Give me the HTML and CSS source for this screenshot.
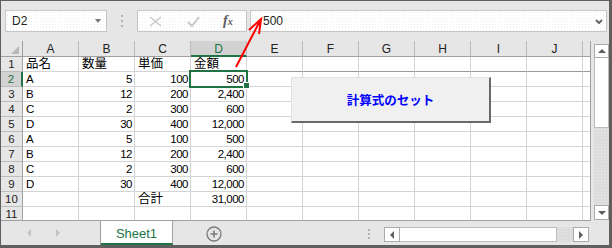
FILE: index.html
```html
<!DOCTYPE html>
<html lang="ja">
<head>
    <meta charset="UTF-8">
    <title>Sheet1 - Excel</title>
    <link rel="stylesheet" href="styles.css">
</head>
<body>
    <div class="window">
        <div class="toolbar">
            <div class="namebox"><span class="val">D2</span><span class="caret"></span></div>
            <div class="grip"></div>
            <div class="fxbtns">
                <svg class="ico-x" width="13" height="11" viewBox="0 0 13 11"><path d="M1 1L12 10M12 1L1 10"/></svg>
                <svg class="ico-ok" width="13" height="11" viewBox="0 0 13 11"><path d="M1 6L5 10L12 1"/></svg>
                <span class="fx"><i>f</i><i class="sub">x</i></span>
            </div>
            <div class="formula">
                <span class="val">500</span>
                <svg class="chev" width="8" height="5" viewBox="0 0 8 5"><path d="M1 1L4 4L7 1"/></svg>
            </div>
        </div>

        <div class="main">
            <div class="sheet">
                <div class="grid" id="grid"></div>
                <div class="sel"></div>
                <div class="handle"></div>
                <button class="macro">計算式のセット</button>
            </div>
            <div class="vscroll">
                <div class="sbtn up"><span class="tri-up"></span></div>
                <div class="vthumb"></div>
                <div class="track"></div>
                <div class="sbtn down"><span class="tri-down"></span></div>
            </div>
        </div>

        <div class="tabbar">
            <div class="nav"><span class="tri-l"></span><span class="tri-r"></span></div>
            <div class="tab">Sheet1</div>
            <svg class="addsheet" width="16" height="16" viewBox="0 0 16 16"><circle cx="8" cy="8" r="7"/><path d="M8 4.5V11.5M4.5 8H11.5"/></svg>
            <div class="hgrip"></div>
            <div class="hscroll">
                <div class="hbtn"><span class="tri-l dark"></span></div>
                <div class="hthumb"></div>
                <div class="htrack"></div>
                <div class="hbtn right"><span class="tri-r dark"></span></div>
            </div>
        </div>

        <svg class="arrow" width="612" height="248" viewBox="0 0 612 248">
            <path d="M236 67L261 19M249 30L261 19L259 34"/>
        </svg>
    </div>

    <script>
        const letters = ['A', 'B', 'C', 'D', 'E', 'F', 'G', 'H', 'I', 'J'];
        const rows = [
            ['品名', '数量', '単価', '金額'],
            ['A', '5', '100', '500'],
            ['B', '12', '200', '2,400'],
            ['C', '2', '300', '600'],
            ['D', '30', '400', '12,000'],
            ['A', '5', '100', '500'],
            ['B', '12', '200', '2,400'],
            ['C', '2', '300', '600'],
            ['D', '30', '400', '12,000'],
            ['', '', '合計', '31,000'],
            ['', '', '', '']
        ];

        let html = '<div class="corner"><span></span></div>';
        letters.forEach(l => {
            html += `<div class="ch${l === 'D' ? ' on' : ''}">${l}</div>`;
        });
        html += '<div class="ch last"></div>';

        rows.forEach((row, i) => {
            const r = i + 1;
            html += `<div class="rh${r === 2 ? ' on' : ''}">${r}</div>`;
            letters.forEach((l, c) => {
                const v = row[c] || '';
                let cls = 'c';
                if (/^[\d,]+$/.test(v)) cls += ' n';
                else if (/[^\x00-\x7f]/.test(v)) cls += ' jp';
                if (r === 1 && c >= 4) cls += ' fz';
                html += `<div class="${cls}">${v}</div>`;
            });
            html += `<div class="c last${r === 1 ? ' fz' : ''}"></div>`;
        });

        document.getElementById('grid').innerHTML = html;
    </script>
</body>
</html>
```

FILE: styles.css
```css
* {
    box-sizing: border-box;
}
html, body {
    margin: 0;
    padding: 0;
}
body {
    width: 612px;
    height: 248px;
    overflow: hidden;
    font-family: "Liberation Sans", "Noto Sans CJK JP", sans-serif;
    background: #e6e6e6;
    color: #222;
}
.window {
    position: relative;
    width: 612px;
    height: 248px;
    border-style: solid;
    border-color: #5f5f5f;
    border-width: 1px 3px 3px 1px;
    background: #e6e6e6;
    display: flex;
    flex-direction: column;
}

/* formula bar */
.toolbar {
    height: 40px;
    flex: none;
    display: flex;
    align-items: flex-start;
    padding: 9px 0 0 4px;
}
.namebox,
.fxbtns,
.formula {
    height: 22px;
    border: 1px solid #c6c6c6;
    background-color: #fff;
    background-image: radial-gradient(circle, #ededed 0.7px, transparent 0.9px);
    background-size: 3px 3px;
    display: flex;
    align-items: center;
}
.namebox {
    width: 102px;
    padding: 0 5px 0 6px;
    font-size: 12px;
}
.namebox .val,
.formula .val {
    flex: 1;
}
.caret {
    width: 0;
    height: 0;
    border-top: 4px solid #777;
    border-left: 3.5px solid transparent;
    border-right: 3.5px solid transparent;
}
.grip {
    width: 2px;
    height: 12px;
    margin: 5px 14px 0;
    background: linear-gradient(#b3b3b3 2px, transparent 2px);
    background-size: 2px 5px;
}
.fxbtns {
    width: 110px;
    padding-left: 11px;
}
.fxbtns svg path {
    fill: none;
    stroke: #c8c8c8;
}
.ico-x path {
    stroke-width: 1.5;
}
.ico-ok {
    margin-left: 25px;
}
.ico-ok path {
    stroke-width: 2;
}
.fx {
    margin-left: 23px;
    font-family: "Liberation Serif", serif;
    font-weight: bold;
    color: #595959;
    font-size: 14px;
    line-height: 14px;
}
.fx .sub {
    font-size: 10px;
}
.formula {
    width: 357px;
    margin-left: 3px;
    padding: 0 3px 0 12px;
    font-size: 12px;
}
.chev path {
    fill: none;
    stroke: #666;
    stroke-width: 2;
}

/* sheet */
.main {
    display: flex;
    height: 180px;
    flex: none;
}
.sheet {
    position: relative;
    width: 590px;
    height: 180px;
    border-right: 1px solid #a0a0a0;
    border-bottom: 1px solid #a0a0a0;
    background: #fff;
    overflow: hidden;
}
.grid {
    display: grid;
    grid-template-columns: 22px repeat(10, 56px) 7px;
    grid-template-rows: 16px repeat(11, 15px);
}
.corner {
    background: #e6e6e6;
    border-right: 1px solid #a0a0a0;
    border-bottom: 1px solid #a0a0a0;
    display: flex;
    align-items: flex-end;
    justify-content: flex-end;
    padding: 0 3px 2px 0;
}
.corner span {
    width: 0;
    height: 0;
    border-left: 8px solid transparent;
    border-bottom: 8px solid #b8b8b8;
}
.ch {
    background: #e6e6e6;
    border-right: 1px solid #bcbcbc;
    border-bottom: 1px solid #a0a0a0;
    text-align: center;
    font-size: 12px;
    line-height: 13px;
    padding-top: 2px;
}
.ch.on {
    background: #d2d2d2;
    color: #217346;
    border-bottom: 2px solid #217346;
}
.rh {
    background: #e6e6e6;
    border-right: 1px solid #a0a0a0;
    border-bottom: 1px solid #bcbcbc;
    text-align: center;
    font-size: 11.5px;
    line-height: 13px;
    padding-top: 1px;
}
.rh.on {
    background: #d2d2d2;
    color: #217346;
    border-right: 2px solid #217346;
}
.c {
    border-right: 1px solid #d4d4d4;
    border-bottom: 1px solid #d4d4d4;
    padding: 1px 3px 0;
    font-size: 11.5px;
    letter-spacing: -0.5px;
    line-height: 13px;
    white-space: nowrap;
    color: #000;
}
.c.n {
    text-align: right;
    padding-right: 2px;
}
.c.jp {
    font-size: 12.5px;
    letter-spacing: 0;
}
.c.fz {
    border-bottom-color: #9b9b9b;
}
.last {
    border-right: none;
}
.sel {
    position: absolute;
    left: 188px;
    top: 29px;
    width: 59px;
    height: 18px;
    border: 2px solid #217346;
}
.handle {
    position: absolute;
    left: 242px;
    top: 41px;
    width: 7px;
    height: 7px;
    background: #217346;
    border: 1px solid #fff;
}
.macro {
    position: absolute;
    left: 290px;
    top: 36px;
    width: 200px;
    height: 46px;
    margin: 0;
    padding: 0;
    background: #f0f0f0;
    border-style: solid;
    border-width: 1px 2px 2px 1px;
    border-color: #e2e2e2 #6b6b6b #6b6b6b #e2e2e2;
    color: #0000ff;
    font-family: "Noto Sans CJK JP", sans-serif;
    font-weight: bold;
    font-size: 12.5px;
}

/* scroll bars */
.vscroll {
    width: 18px;
    padding: 3px 0 0 3px;
    display: flex;
    flex-direction: column;
}
.sbtn,
.hbtn {
    background: #fff;
    border: 1px solid #ababab;
    display: flex;
    align-items: center;
    justify-content: center;
}
.sbtn.up {
    height: 14px;
}
.sbtn.down {
    height: 15px;
    margin-bottom: 1px;
}
.vthumb {
    height: 70px;
    background: #fff;
    border: 1px solid #bcbcbc;
    border-top: none;
}
.track,
.htrack {
    flex: 1;
    background-color: #dcdcdc;
    background-image: radial-gradient(circle, #e9e9e9 0.7px, transparent 0.9px);
    background-size: 3px 3px;
}
.tri-up,
.tri-down {
    width: 0;
    height: 0;
    border-left: 4px solid transparent;
    border-right: 4px solid transparent;
}
.tri-up {
    border-bottom: 4px solid #606060;
}
.tri-down {
    border-top: 4px solid #606060;
}

/* sheet tabs */
.tabbar {
    height: 24px;
    flex: none;
    display: flex;
    align-items: flex-start;
}
.nav {
    width: 100px;
    height: 24px;
    border-right: 1px solid #a0a0a0;
    display: flex;
    align-items: center;
    padding-left: 26px;
    gap: 25px;
}
.tri-l,
.tri-r {
    width: 0;
    height: 0;
    border-top: 4px solid transparent;
    border-bottom: 4px solid transparent;
}
.tri-l {
    border-right: 4px solid #c3c3c3;
}
.tri-r {
    border-left: 4px solid #c3c3c3;
}
.tri-l.dark {
    border-right-color: #606060;
}
.tri-r.dark {
    border-left-color: #606060;
}
.tab {
    width: 72px;
    height: 24px;
    background: #fff;
    border-right: 1px solid #a0a0a0;
    border-bottom: 2px solid #217346;
    color: #217346;
    font-size: 13px;
    text-align: center;
    padding-top: 2px;
    line-height: 21px;
}
.addsheet {
    margin: 5px 0 0 33px;
}
.addsheet circle,
.addsheet path {
    fill: none;
    stroke: #7a7a7a;
    stroke-width: 1.3;
}
.addsheet path {
    stroke-width: 1.6;
}
.hgrip {
    margin: 8px 0 0 auto;
    width: 2px;
    height: 11px;
    background: linear-gradient(#b3b3b3 2px, transparent 2px);
    background-size: 2px 4px;
}
.hscroll {
    width: 205px;
    height: 15px;
    margin: 6px 20px 0 14px;
    display: flex;
}
.hbtn {
    width: 16px;
}
.hthumb {
    width: 157px;
    background: #fff;
    border: 1px solid #bcbcbc;
    border-left: none;
}
.htrack {
    flex: none;
    width: 16px;
}

.arrow {
    position: absolute;
    left: -1px;
    top: -1px;
    pointer-events: none;
}
.arrow path {
    fill: none;
    stroke: #ff0000;
    stroke-width: 2;
}
```
